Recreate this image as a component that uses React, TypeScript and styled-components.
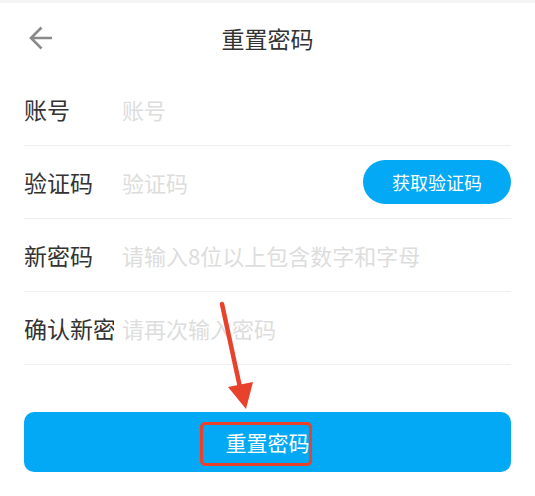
import React from "react";
import styled, { createGlobalStyle } from "styled-components";

const GlobalStyle = createGlobalStyle`
  html, body {
    margin: 0;
    padding: 0;
    background: #ffffff;
  }
  body {
    font-family: "Noto Sans CJK SC", "Noto Sans", sans-serif;
  }
  * { box-sizing: border-box; }
`;

const Page = styled.div`
  position: relative;
  width: 535px;
  height: 496px;
  background: #ffffff;
  overflow: hidden;
`;

const StatusStrip = styled.div`
  height: 3px;
  background: #f4f4f4;
`;

const Header = styled.header`
  height: 70px;
  display: grid;
  grid-template-columns: 1fr auto 1fr;
  align-items: center;
  padding: 0 29px;
`;

const BackButton = styled.button`
  justify-self: start;
  width: 24px;
  height: 24px;
  padding: 0;
  border: none;
  background: transparent;
  display: flex;
  align-items: center;
  justify-content: center;
`;

const Title = styled.h1`
  margin: 0;
  font-size: 23px;
  font-weight: 400;
  color: #333333;
  line-height: 32px;
`;

const Form = styled.div`
  padding: 0 24px;
  display: flex;
  flex-direction: column;
`;

const Row = styled.div`
  height: 73px;
  display: flex;
  align-items: center;
  border-bottom: 1.5px solid #eeeeee;
`;

const Label = styled.div`
  width: 90px;
  flex: none;
  overflow: hidden;
  white-space: nowrap;
  font-size: 23px;
  color: #333333;
  line-height: 34px;
`;

const Input = styled.input`
  flex: 1;
  min-width: 0;
  margin-left: 8px;
  border: none;
  outline: none;
  padding: 0;
  height: 34px;
  background: transparent;
  font-family: "Noto Sans CJK SC", "Noto Sans", sans-serif;
  font-size: 22px;
  color: #333333;
  &::placeholder {
    color: #dddddd;
  }
`;

const CodeButton = styled.button`
  flex: none;
  width: 148px;
  height: 44px;
  border: none;
  border-radius: 22px;
  background: #03a9f4;
  color: #ffffff;
  font-family: "Noto Sans CJK SC", "Noto Sans", sans-serif;
  font-size: 18px;
  padding: 0;
`;

const SubmitWrap = styled.div`
  position: relative;
  margin: 47px 24px 0;
`;

const SubmitButton = styled.button`
  width: 100%;
  height: 60px;
  border: none;
  border-radius: 10px;
  background: #03a9f4;
  color: #ffffff;
  font-family: "Noto Sans CJK SC", "Noto Sans", sans-serif;
  font-size: 21px;
  padding: 0;
`;

const Highlight = styled.div`
  position: absolute;
  left: 176px;
  top: 10px;
  width: 112px;
  height: 44px;
  border: 3px solid #e8412c;
  border-radius: 5px;
  pointer-events: none;
`;

const ArrowOverlay = styled.svg`
  position: absolute;
  left: 0;
  top: 0;
  pointer-events: none;
`;

const rows = [
  { label: "账号", placeholder: "账号" },
  { label: "验证码", placeholder: "验证码", code: true },
  { label: "新密码", placeholder: "请输入8位以上包含数字和字母" },
  { label: "确认新密码", placeholder: "请再次输入密码" },
];

export default function App() {
  return (
    <>
      <GlobalStyle />
      <Page>
        <StatusStrip />
        <Header>
          <BackButton aria-label="返回">
            <svg width="24" height="24" viewBox="0 0 24 24" fill="none">
              <path
                d="M23 12H2M12.5 1.5L2 12l10.5 10.5"
                stroke="#8a8a8a"
                strokeWidth="2.6"
                strokeLinecap="butt"
                strokeLinejoin="miter"
              />
            </svg>
          </BackButton>
          <Title>重置密码</Title>
          <span />
        </Header>
        <Form>
          {rows.map((r) => (
            <Row key={r.label}>
              <Label>{r.label}</Label>
              <Input placeholder={r.placeholder} />
              {r.code && <CodeButton>获取验证码</CodeButton>}
            </Row>
          ))}
        </Form>
        <SubmitWrap>
          <SubmitButton>重置密码</SubmitButton>
          <Highlight />
        </SubmitWrap>
        <ArrowOverlay width="535" height="496" viewBox="0 0 535 496">
          <line
            x1="222"
            y1="304"
            x2="241"
            y2="392"
            stroke="#e8412c"
            strokeWidth="4.5"
            strokeLinecap="round"
          />
          <polygon points="246,409 228,387 253,382" fill="#e8412c" />
        </ArrowOverlay>
      </Page>
    </>
  );
}
